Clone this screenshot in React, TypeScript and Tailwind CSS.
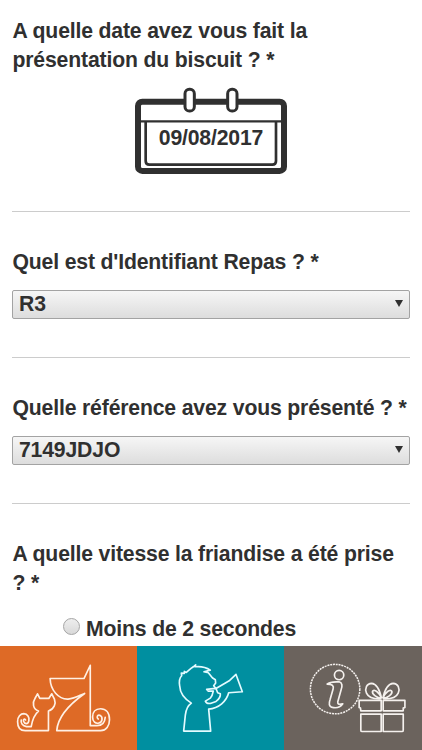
import { useState } from "react";

function Calendar({ date }: { date: string }) {
  return (
    <div className="relative mx-auto h-[100px] w-[172px]">
      <svg className="h-full w-full" viewBox="0 0 516 300" fill="none" stroke="#303030">
        <rect x="39" y="65" width="438" height="208" rx="13" strokeWidth="18" />
        <path d="M48 124H468" strokeWidth="7" />
        <path d="M62 126V243Q62 254 73 254H442Q453 254 453 243V126" strokeWidth="8" />
        <rect x="180" y="28" width="28" height="65" rx="13" fill="#fff" strokeWidth="9" />
        <rect x="308" y="28" width="28" height="65" rx="13" fill="#fff" strokeWidth="9" />
      </svg>
      <span className="absolute inset-x-0 top-[43px] text-center leading-[29px]">{date}</span>
    </div>
  );
}

function Select({ value }: { value: string }) {
  return (
    <button className="flex h-[29px] w-full items-center justify-between rounded-[2px] border border-[#a3a3a3] bg-linear-to-b from-[#f6f6f6] to-[#dddddd] pr-[6px] pl-[6px] leading-[27px]">
      <span className="-mt-[2px]">{value}</span>
      <svg className="mb-[2px] h-[7px] w-[8px]" viewBox="0 0 8 7" fill="#303030">
        <path d="M0 0H8L4 7Z" />
      </svg>
    </button>
  );
}

function PetsIcon() {
  return (
    <svg className="h-full w-full" viewBox="0 18 414 312" fill="none" stroke="#fff0e4" strokeWidth="5" strokeLinejoin="round" strokeLinecap="round">
      <path d="M272 75L253 115H151C152 150 176 178 205 177C228 175 242 164 255 160C210 192 174 231 171 272H303C320 272 330 257 330 239C330 218 319 206 303 206C287 206 279 217 279 231C279 246 288 252 298 249C309 247 311 231 301 226C293 223 290 233 296 237M272 75V257H292C307 257 316 247 317 232" />
      <path d="M94 260C97 241 101 226 116 213C99 207 97 188 105 176L113 161L120 175H147L156 161L164 177C169 190 164 207 146 213V272H76C61 272 53 262 53 245C53 230 62 221 72 221C83 222 89 232 87 242C85 254 74 253 71 244C69 238 75 235 77 240M94 260H80C68 258 62 250 64 240" />
    </svg>
  );
}

function CallIcon() {
  return (
    <svg className="h-full w-full" viewBox="3 18 441 312" fill="none" stroke="#e4fbff" strokeWidth="5" strokeLinejoin="round">
      <path d="M143 273L148 225Q151 199 166 189C148 178 132 160 131 137C129 124 132 112 137 107L136 99L145 100V94L151 97L165 85L172 80L179 74L177 80C194 78 211 82 223 90L204 95L217 98L229 113L238 119L239 129L233 137L240 145L281 121L300 103L319 155L278 158C272 183 248 205 218 207L224 273Z" />
      <path d="M238 145L212 148L217 153L232 153L228 166L223 174L208 183C211 190 216 191 223 190L240 184C247 179 254 171 253 161L245 158L240 145" />
    </svg>
  );
}

function GiftIcon() {
  return (
    <svg className="h-full w-full" viewBox="6 18 412 312" fill="none" stroke="#f5f1ee" strokeWidth="5" strokeLinejoin="round">
      <circle cx="159" cy="147" r="74" strokeDasharray="6 2.5" strokeWidth="4.5" />
      <circle cx="171" cy="105" r="14" />
      <path d="M135 132C145 124 159 126 171 125C181 127 181 139 177 149L167 185C166 193 171 194 182 191C174 202 161 205 148 201C138 197 141 187 144 178L153 147C156 137 151 132 135 132Z" />
      <path d="M231 181H297V212H236L235 204L231 202ZM303 181H368V202L363 204V212H303ZM236 222H297V274H240Q236 274 236 270ZM303 222H363V270Q363 274 359 274H303Z" />
      <path d="M298 175C293 151 284 131 268 130C254 130 247 145 253 159C259 173 278 177 298 176M302 175C307 151 317 131 333 130C347 130 354 145 348 159C342 173 321 177 302 176M297 175C286 173 269 164 271 154C275 144 292 158 298 174M303 175C315 173 331 164 329 154C325 144 308 158 302 174" />
    </svg>
  );
}

export default function App() {
  const [speed, setSpeed] = useState("");

  return (
    <div className="flex h-[750px] w-full flex-col overflow-hidden bg-white font-['Liberation_Sans',sans-serif] text-[21.2px] leading-[29px] font-bold tracking-[-0.16px] text-[#303030]">
      <main className="h-[646px] overflow-hidden px-3 pt-4">
        <section className="h-[196px] border-b border-[#cccccc]">
          <h2 className="pl-[0.5px]">
            A quelle date avez vous fait la
            <br />
            présentation du biscuit ? *
          </h2>
          <div className="mt-[6px]">
            <Calendar date="09/08/2017" />
          </div>
        </section>

        <section className="h-[146px] border-b border-[#cccccc] pt-[35px]">
          <h2 className="pl-[0.5px]">Quel est d'Identifiant Repas ? *</h2>
          <div className="mt-[14px]">
            <Select value="R3" />
          </div>
        </section>

        <section className="h-[146px] border-b border-[#cccccc] pt-[35px]">
          <h2 className="pl-[0.5px] whitespace-nowrap">Quelle référence avez vous présenté ? *</h2>
          <div className="mt-[14px]">
            <Select value="7149JDJO" />
          </div>
        </section>

        <section className="pt-[35px]">
          <h2 className="pl-[0.5px]">
            A quelle vitesse la friandise a été prise
            <br />? *
          </h2>
          <label className="mt-[17px] flex items-center pl-[51px]">
            <input
              type="radio"
              name="speed"
              checked={speed === "moins2"}
              onChange={() => setSpeed("moins2")}
              className="mr-[6px] mb-[4px] h-[17px] w-[17px] appearance-none rounded-full border border-[#a5a5a5] bg-linear-to-b from-[#eeeeee] to-[#d9d9d9]"
            />
            Moins de 2 secondes
          </label>
        </section>
      </main>

      <nav className="grid h-[104px] grid-cols-[137.4px_147px_1fr]">
        <a className="bg-[#de6a26]">
          <PetsIcon />
        </a>
        <a className="bg-[#008fa0]">
          <CallIcon />
        </a>
        <a className="bg-[#6b635d]">
          <GiftIcon />
        </a>
      </nav>
    </div>
  );
}
